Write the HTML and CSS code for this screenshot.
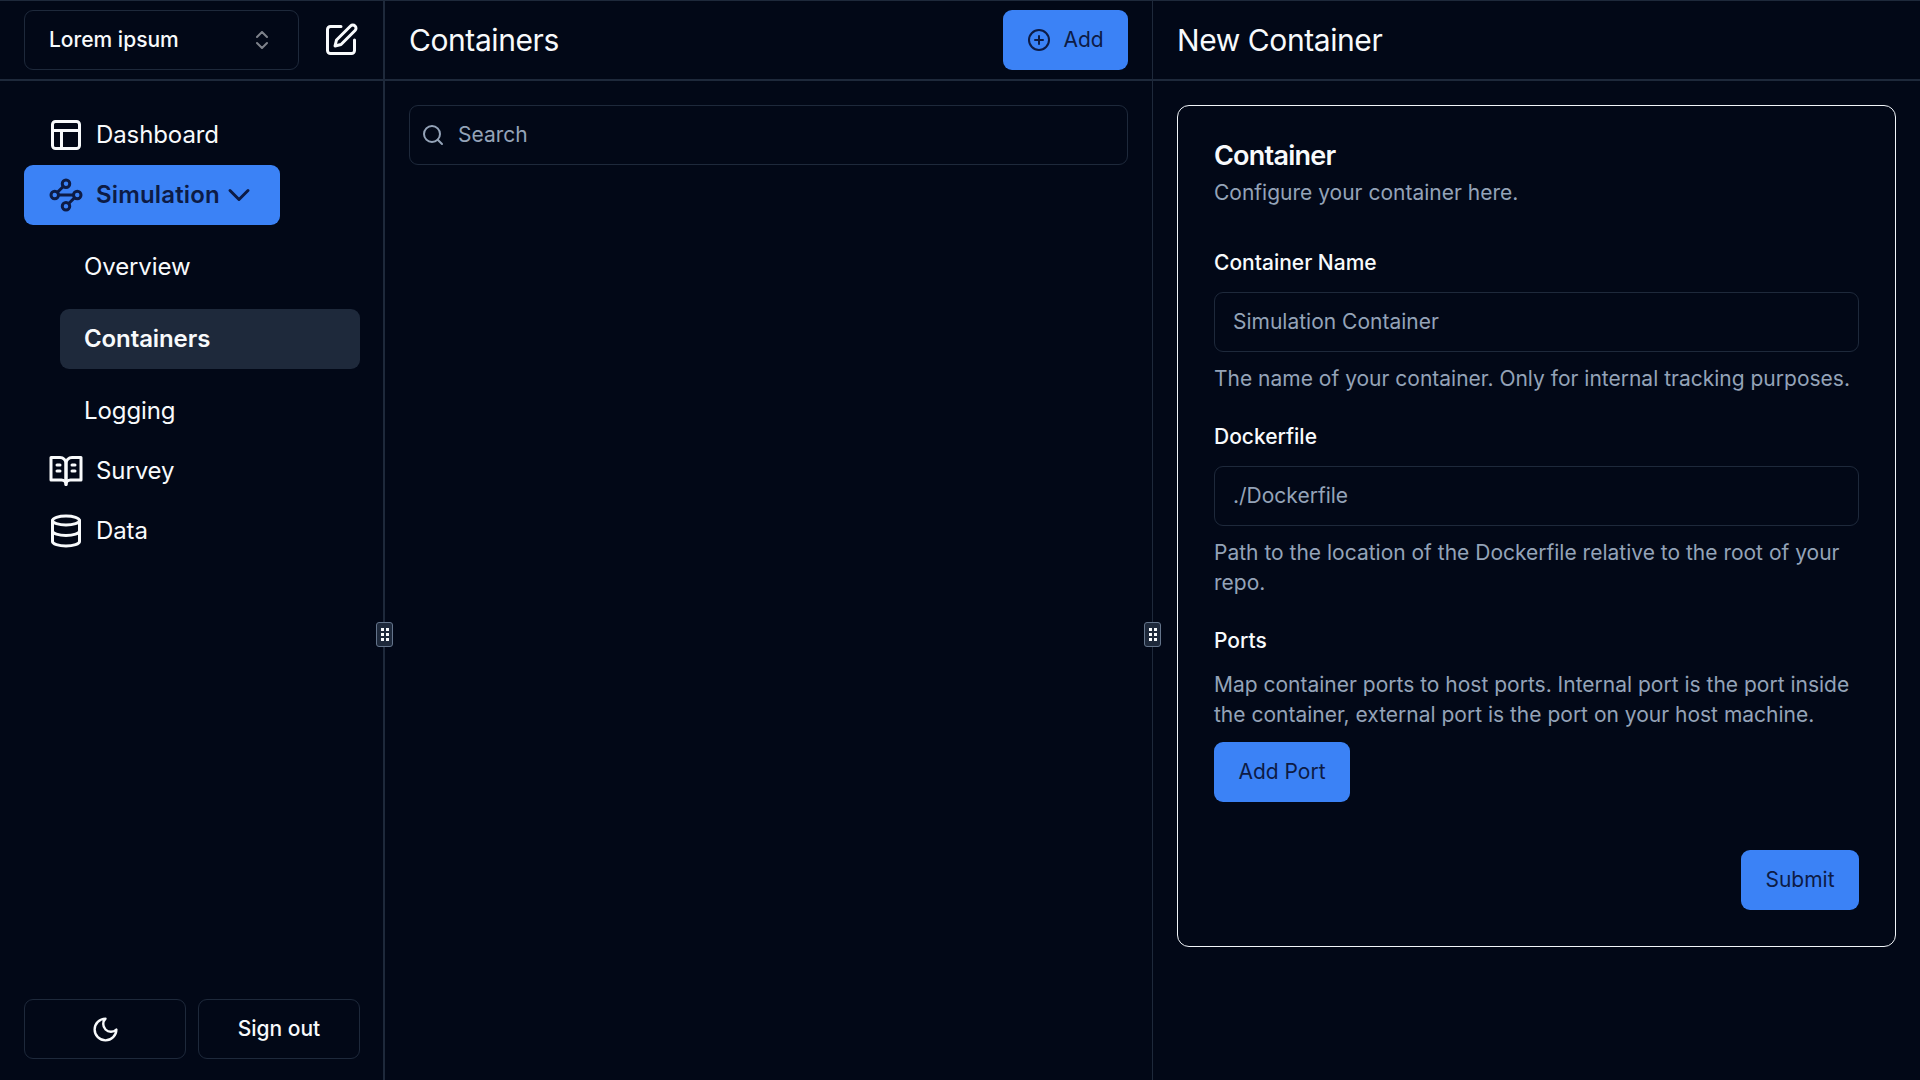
FILE: index.html
```html
<!DOCTYPE html>
<html lang="en">
<head>
    <meta charset="UTF-8">
    <meta name="viewport" content="width=device-width, initial-scale=1.0">
    <title>Containers</title>
    <link rel="stylesheet" href="styles.css">
</head>
<body>
    <div class="app">
        <aside class="sidebar">
            <div class="sidebar-top">
                <button class="team-select">
                    <span>Lorem ipsum</span>
                    <svg class="icon-sm faded" viewBox="0 0 24 24"><path d="m7 15 5 5 5-5"/><path d="m7 9 5-5 5 5"/></svg>
                </button>
                <svg class="icon" viewBox="0 0 24 24"><path d="M12 3H5a2 2 0 0 0-2 2v14a2 2 0 0 0 2 2h14a2 2 0 0 0 2-2v-7"/><path d="M18.375 2.625a2.121 2.121 0 1 1 3 3L12 15l-4 1 1-4Z"/></svg>
            </div>
            <nav class="nav">
                <a class="nav-item">
                    <svg class="icon" viewBox="0 0 24 24"><rect x="3" y="3" width="18" height="18" rx="2"/><path d="M3 9h18"/><path d="M9 21V9"/></svg>
                    <span>Dashboard</span>
                </a>
                <a class="nav-item primary">
                    <svg class="icon" viewBox="0 0 24 24"><circle cx="12" cy="4.5" r="2.5"/><path d="m10.2 6.3-3.9 3.9"/><circle cx="4.5" cy="12" r="2.5"/><path d="M7 12h10"/><circle cx="19.5" cy="12" r="2.5"/><path d="m13.8 17.7 3.9-3.9"/><circle cx="12" cy="19.5" r="2.5"/></svg>
                    <span>Simulation</span>
                    <svg class="icon chevron" viewBox="0 0 24 24"><path d="m6 9 6 6 6-6"/></svg>
                </a>
                <div class="subnav">
                    <a class="sub-item">Overview</a>
                    <a class="sub-item active">Containers</a>
                    <a class="sub-item">Logging</a>
                </div>
                <a class="nav-item">
                    <svg class="icon" viewBox="0 0 24 24"><path d="M2 3h6a4 4 0 0 1 4 4v14a3 3 0 0 0-3-3H2z"/><path d="M22 3h-6a4 4 0 0 0-4 4v14a3 3 0 0 1 3-3h7z"/><path d="M6 8h2"/><path d="M6 12h2"/><path d="M16 8h2"/><path d="M16 12h2"/></svg>
                    <span>Survey</span>
                </a>
                <a class="nav-item">
                    <svg class="icon" viewBox="0 0 24 24"><ellipse cx="12" cy="5" rx="9" ry="3"/><path d="M3 5V19A9 3 0 0 0 21 19V5"/><path d="M3 12A9 3 0 0 0 21 12"/></svg>
                    <span>Data</span>
                </a>
            </nav>
            <div class="sidebar-bottom">
                <button class="btn outline">
                    <svg class="icon-moon" viewBox="0 0 24 24"><path d="M12 3a6 6 0 0 0 9 9 9 9 0 1 1-9-9Z"/></svg>
                </button>
                <button class="btn outline">Sign out</button>
            </div>
        </aside>

        <div class="handle">
            <div class="grip"><i></i><i></i><i></i><i></i><i></i><i></i></div>
        </div>

        <section class="panel list-panel">
            <header class="panel-head">
                <h2>Containers</h2>
                <button class="btn solid add-btn">
                    <svg class="icon-sm" viewBox="0 0 24 24"><circle cx="12" cy="12" r="10"/><path d="M8 12h8"/><path d="M12 8v8"/></svg>
                    Add
                </button>
            </header>
            <div class="panel-body">
                <div class="search">
                    <svg class="icon-sm" viewBox="0 0 24 24"><circle cx="11" cy="11" r="8"/><path d="m21 21-4.3-4.3"/></svg>
                    <input type="text" placeholder="Search">
                </div>
            </div>
        </section>

        <div class="handle">
            <div class="grip"><i></i><i></i><i></i><i></i><i></i><i></i></div>
        </div>

        <section class="panel form-panel">
            <header class="panel-head">
                <h2>New Container</h2>
            </header>
            <div class="panel-body">
                <form class="card">
                    <h3>Container</h3>
                    <p class="muted">Configure your container here.</p>

                    <label class="field-label first">Container Name</label>
                    <input class="field" type="text" placeholder="Simulation Container">
                    <p class="muted help">The name of your container. Only for internal tracking purposes.</p>

                    <label class="field-label">Dockerfile</label>
                    <input class="field" type="text" placeholder="./Dockerfile">
                    <p class="muted help">Path to the location of the Dockerfile relative to the root of your repo.</p>

                    <label class="field-label">Ports</label>
                    <p class="muted ports-help">Map container ports to host ports. Internal port is the port inside the container, external port is the port on your host machine.</p>
                    <button class="btn solid port-btn" type="button">Add Port</button>

                    <div class="card-foot">
                        <button class="btn solid submit-btn" type="button">Submit</button>
                    </div>
                </form>
            </div>
        </section>
    </div>
</body>
</html>
```

FILE: styles.css
```css
* {
    box-sizing: border-box;
}
body {
    margin: 0;
    background-color: #020817;
    color: #f8fafc;
    font-family: Inter, "Liberation Sans", sans-serif;
    font-size: 21px;
}
svg {
    fill: none;
    stroke: currentColor;
    stroke-width: 2;
    stroke-linecap: round;
    stroke-linejoin: round;
    flex-shrink: 0;
}
button, input {
    font-family: inherit;
    font-size: 21px;
    color: inherit;
}
.app {
    display: flex;
    height: 1080px;
    border-top: 1px solid #1e293b;
}
.icon {
    width: 36px;
    height: 36px;
}
.icon-sm {
    width: 24px;
    height: 24px;
}
.icon-moon {
    width: 29px;
    height: 29px;
}
.faded {
    opacity: 0.5;
}

/* sidebar */
.sidebar {
    width: 384px;
    display: flex;
    flex-direction: column;
    border-right: 1px solid #1e293b;
}
.sidebar-top {
    height: 80px;
    padding: 9px 24px 0;
    display: flex;
    justify-content: space-between;
    border-bottom: 2px solid #1e293b;
}
.team-select {
    width: 275px;
    height: 60px;
    padding: 0 24px 2px;
    display: flex;
    align-items: center;
    justify-content: space-between;
    background: none;
    border: 1px solid #1e293b;
    border-radius: 9px;
    font-weight: 500;
}
.team-select svg {
    margin-top: 2px;
}
.sidebar-top .icon {
    margin: 12px 0 0;
}
.nav {
    flex: 1;
    padding: 24px 23px 0 24px;
}
.nav-item {
    height: 60px;
    width: 100%;
    padding: 0 24px;
    display: flex;
    align-items: center;
    gap: 12px;
    font-size: 24px;
    letter-spacing: -0.1px;
    border-radius: 9px;
}
.nav-item span {
    margin-top: -2px;
}
.nav-item.primary {
    width: 256px;
    background-color: #3b82f6;
    color: #0d1b45;
    font-weight: 600;
    letter-spacing: 0.15px;
}
.chevron {
    margin-left: -11px;
}
.subnav {
    display: flex;
    flex-direction: column;
    gap: 12px;
    padding: 12px 0 0 36px;
}
.sub-item {
    height: 60px;
    padding: 0 24px 2px;
    display: flex;
    align-items: center;
    font-size: 24px;
    letter-spacing: -0.1px;
    border-radius: 9px;
}
.sub-item.active {
    background-color: #1e293b;
    font-weight: 600;
}
.sidebar-bottom {
    display: grid;
    grid-template-columns: 1fr 1fr;
    gap: 12px;
    padding: 0 23px 21px 24px;
}
.btn {
    height: 60px;
    padding: 0 0 2px;
    display: inline-flex;
    align-items: center;
    justify-content: center;
    border-radius: 9px;
    font-weight: 500;
}
.btn svg {
    margin-top: 2px;
}
.btn.outline {
    background: none;
    border: 1px solid #1e293b;
}
.btn.solid {
    background-color: #3b82f6;
    color: #0d1b45;
    border: none;
    font-weight: 400;
}

/* resize handles */
.handle {
    width: 1px;
    background-color: #1e293b;
    position: relative;
}
.grip {
    position: absolute;
    top: 621px;
    left: -8px;
    width: 17px;
    height: 25px;
    padding: 5px 3px;
    display: grid;
    grid-template-columns: 3px 3px;
    grid-auto-rows: 3px;
    gap: 2px;
    justify-content: center;
    align-content: center;
    background-color: #1e293b;
    border: 1px solid #64748b;
    border-radius: 3px;
}
.grip i {
    background-color: #f8fafc;
}

/* panels */
.list-panel {
    width: 767px;
}
.form-panel {
    flex: 1;
}
.panel-head {
    height: 80px;
    padding: 9px 24px 0;
    display: flex;
    justify-content: space-between;
    border-bottom: 2px solid #1e293b;
}
.panel-head h2 {
    margin: 0;
    height: 60px;
    line-height: 60px;
    font-size: 30px;
    font-weight: 400;
    letter-spacing: -0.42px;
}
.add-btn {
    width: 125px;
    gap: 12px;
}
.panel-body {
    padding: 24px;
}
.search {
    height: 60px;
    padding: 0 0 2px 11px;
    display: flex;
    align-items: center;
    gap: 11px;
    border: 1px solid #1e293b;
    border-radius: 9px;
    color: #94a3b8;
}
.search svg {
    margin-top: 2px;
}
.search input, .field {
    background: none;
    border: none;
    outline: none;
    width: 100%;
}
input::placeholder {
    color: #94a3b8;
    opacity: 1;
}

/* form card */
.card {
    height: 842px;
    padding: 36px;
    border: 1px solid #f1f5f9;
    border-radius: 12px;
}
.card h3 {
    margin: 0;
    font-size: 27px;
    line-height: 27px;
    font-weight: 600;
    letter-spacing: -0.77px;
}
.muted {
    margin: 0;
    color: #94a3b8;
    line-height: 30px;
}
.card h3 + .muted {
    margin-top: 9px;
}
.field-label {
    display: block;
    margin: 32px 0 19px;
    font-weight: 500;
    line-height: 21px;
}
.field-label.first {
    margin-top: 44px;
}
.field {
    display: block;
    height: 60px;
    padding: 0 18px 2px;
    border: 1px solid #1e293b;
    border-radius: 9px;
}
.help {
    margin-top: 12px;
}
.ports-help {
    margin-top: 0;
}
.port-btn {
    width: 136px;
    margin-top: 12px;
}
.card-foot {
    display: flex;
    justify-content: flex-end;
    margin-top: 48px;
}
.submit-btn {
    width: 118px;
}
```
